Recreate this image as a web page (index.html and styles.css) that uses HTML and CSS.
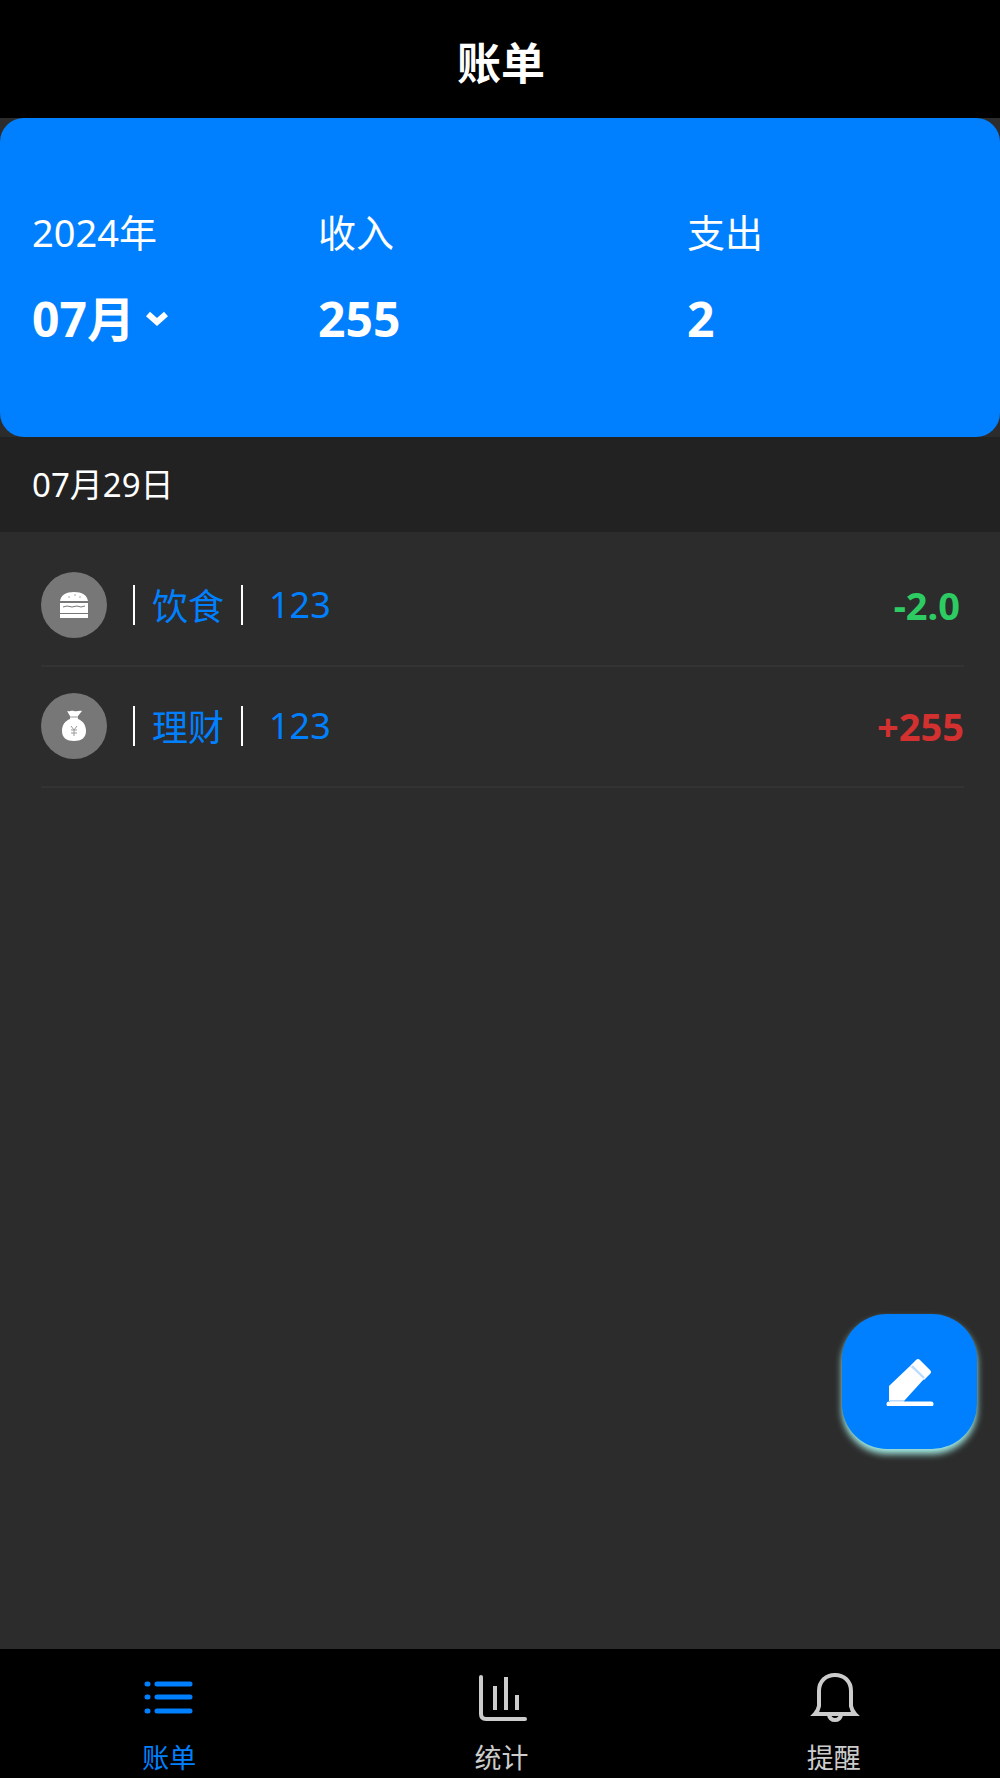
FILE: index.html
```html
<!DOCTYPE html>
<html lang="zh-CN">
<head>
  <meta charset="utf-8">
  <meta name="viewport" content="width=device-width, initial-scale=1">
  <title>账单</title>
  <link rel="stylesheet" href="styles.css">
</head>
<body>
  <header class="topbar"><h1 class="topbar-title">账单</h1></header>

  <main class="content">
    <section class="summary">
      <div class="summary-item">
        <span class="summary-label">2024年</span>
        <button class="month-button" type="button">07月
          <svg class="chevron" viewBox="0 0 24 16" aria-hidden="true"><path d="M3 3l9 8 9-8"/></svg>
        </button>
      </div>
      <div class="summary-item">
        <span class="summary-label">收入</span>
        <strong class="summary-value">255</strong>
      </div>
      <div class="summary-item">
        <span class="summary-label">支出</span>
        <strong class="summary-value">2</strong>
      </div>
    </section>

    <h2 class="day">07月29日</h2>
    <ul class="records">
      <li class="record">
        <span class="record-icon">
          <svg viewBox="0 0 32 32" aria-hidden="true">
            <path fill="#fff" d="M2 12C3 6 8 3 16 3s13 3 14 9zM2 14h28v5H2zM2 19h28v5H2zM2 25h28v4H2z"/>
            <path fill="none" stroke="#777" d="M5 18l4-1 5 1 5-1 4 1 4-1"/>
            <path fill="none" stroke="#aaa" d="M10 8h2M16 6h2M21 8h2"/>
          </svg>
        </span>
        <span class="record-category">饮食</span>
        <span class="record-note">123</span>
        <strong class="record-amount expense">-2.0</strong>
      </li>
      <li class="record">
        <span class="record-icon">
          <svg viewBox="0 0 32 32" aria-hidden="true">
            <path fill="#fff" d="M9 1c3 1 4-1 7 0s5-1 8 0l-4 5v3c5 2 8 6 8 12 0 7-5 10-12 10S4 28 4 21C4 15 7 11 12 9V6z"/>
            <path fill="none" stroke="#999" d="M12 7h8M13 16l3 4 3-4M13 20h6M13 23h6M16 20v6"/>
          </svg>
        </span>
        <span class="record-category">理财</span>
        <span class="record-note">123</span>
        <strong class="record-amount income">+255</strong>
      </li>
    </ul>
  </main>

  <button class="fab" type="button" aria-label="记一笔">
    <svg viewBox="0 0 48 48" aria-hidden="true">
      <path fill="#fff" d="M3 43V28L24 8l14 13-20 22z"/>
      <path fill="#fff" d="M24 8l6-6q2-2 4 0l10 10q2 2 0 4l-6 6z"/>
      <path fill="none" stroke="#b9d9ff" stroke-width="2" d="M26 8l12 12M4 43h14"/>
      <path fill="none" stroke="#fff" stroke-width="5" stroke-linecap="round" d="M3 46h42"/>
    </svg>
  </button>

  <nav class="tabbar">
    <a class="tab tab-active" href="#bills">
      <svg class="tab-icon" viewBox="0 0 52 52" aria-hidden="true">
        <path d="M14 13h33M14 26h33M14 40h33" stroke-width="5" stroke-linecap="round"/>
        <path d="M4 13h1M4 26h1M4 40h1" stroke-width="5" stroke-linecap="round"/>
      </svg>
      <span>账单</span>
    </a>
    <a class="tab" href="#stats">
      <svg class="tab-icon" viewBox="0 0 52 52" aria-hidden="true">
        <path d="M6 6v37q0 5 5 5h39" stroke-width="4" stroke-linecap="round"/>
        <path d="M20 15v24M31 6v33M42 24v15" stroke-width="4"/>
      </svg>
      <span>统计</span>
    </a>
    <a class="tab" href="#reminders">
      <svg class="tab-icon" viewBox="0 0 52 52" aria-hidden="true">
        <path d="M11 35V20C11 10 18 4 27 4s16 6 16 16v15q1 5 4 8H7q3-3 4-8z" stroke-width="4"/>
        <path d="M21 44q1 5 6 5t6-5" stroke-width="4"/>
      </svg>
      <span>提醒</span>
    </a>
  </nav>
</body>
</html>
```
FILE: styles.css
```css
* {
  box-sizing: border-box;
}

body {
  display: flex;
  flex-direction: column;
  min-height: 100vh;
  margin: 0;
  background: #2c2c2c;
  color: #fff;
  font-family: "Noto Sans", "Noto Sans CJK SC", sans-serif;
}

button {
  padding: 0;
  border: 0;
  color: inherit;
  font: inherit;
  cursor: pointer;
}

.topbar {
  padding: 36px 30px 28px 32px;
  background: #000;
  text-align: center;
}

.topbar-title {
  margin: 0;
  font-size: 44px;
  line-height: 54px;
}

.content {
  flex: 1;
}

.summary {
  display: grid;
  grid-template-columns: 286fr 369fr 281fr;
  padding: 86px 32px;
  border-radius: 24px;
  background: #0080ff;
}

.summary-item {
  display: flex;
  flex-direction: column;
  align-items: flex-start;
  gap: 27px;
}

.summary-label {
  font-size: 38px;
  line-height: 56px;
}

.summary-value,
.month-button {
  font-size: 48px;
  font-weight: 700;
  line-height: 64px;
}

.month-button {
  display: flex;
  align-items: center;
  gap: 10px;
  background: none;
}

.chevron {
  width: 24px;
  height: 16px;
  fill: none;
  stroke: #fff;
  stroke-width: 6;
}

.day {
  margin: 0;
  padding: 24px 32px;
  background: #222;
  font-size: 33px;
  font-weight: 400;
  line-height: 47px;
}

.records {
  margin: 0;
  padding: 14px 36px 0 41px;
  list-style: none;
}

.record {
  display: flex;
  align-items: center;
  height: 121px;
  padding-bottom: 2px;
  border-bottom: 2px solid #333;
  font-size: 36px;
  line-height: 40px;
}

.record-icon {
  display: flex;
  align-items: center;
  justify-content: center;
  width: 66px;
  height: 66px;
  margin-right: 26px;
  border-radius: 50%;
  background: #777;
}

.record-icon svg {
  width: 32px;
  height: 32px;
}

.record-category {
  padding: 4px 17px 0;
  border: solid #fff;
  border-width: 0 2px;
  color: #0080ff;
  line-height: 36px;
}

.record-note {
  margin-left: 26px;
  color: #0080ff;
}

.record-amount {
  margin-left: auto;
  font-size: 38px;
}

.expense {
  padding-right: 4px;
  color: #2dcc62;
}

.income {
  color: #d33030;
}

.fab {
  position: fixed;
  right: 23px;
  bottom: 329px;
  display: flex;
  align-items: center;
  justify-content: center;
  width: 135px;
  height: 135px;
  border-radius: 45px;
  background: #0080ff;
  box-shadow: 0 5px 7px #a4eee6;
}

.fab svg {
  width: 48px;
  height: 48px;
}

.tabbar {
  display: flex;
  padding: 22px 0 3px 3px;
  background: #000;
}

.tab {
  display: flex;
  flex: 1;
  flex-direction: column;
  align-items: center;
  gap: 18px;
  color: #ccc;
  font-size: 27px;
  line-height: 34px;
  text-decoration: none;
}

.tab-active {
  color: #0080ff;
}

.tab-icon {
  width: 52px;
  height: 52px;
  fill: none;
  stroke: currentColor;
}
```
